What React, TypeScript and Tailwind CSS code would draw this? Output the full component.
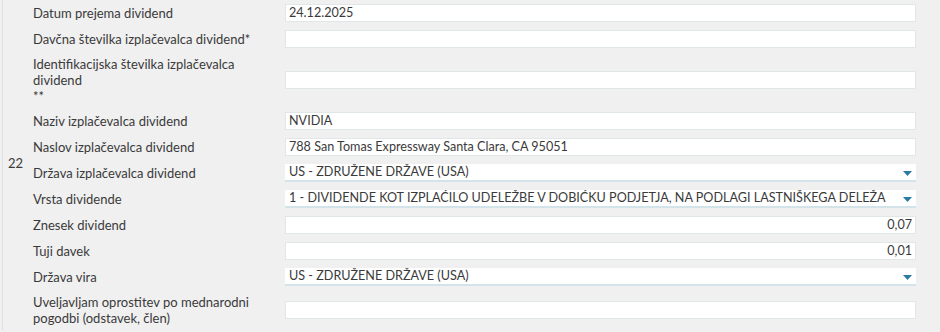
import React from 'react';

type Row = {
    label: React.ReactNode;
    value?: string;
    kind?: 'text' | 'number' | 'select';
};

const rows: Row[] = [
    { label: 'Datum prejema dividend', value: '24.12.2025' },
    { label: 'Davčna številka izplačevalca dividend*' },
    {
        label: (
            <>
                Identifikacijska številka izplačevalca dividend
                <span className="block">**</span>
            </>
        ),
    },
    { label: 'Naziv izplačevalca dividend', value: 'NVIDIA' },
    { label: 'Naslov izplačevalca dividend', value: '788 San Tomas Expressway Santa Clara, CA 95051' },
    { label: 'Država izplačevalca dividend', value: 'US - ZDRUŽENE DRŽAVE (USA)', kind: 'select' },
    {
        label: 'Vrsta dividende',
        value: '1 - DIVIDENDE KOT IZPLAĆILO UDELEŽBE V DOBIĆKU PODJETJA, NA PODLAGI LASTNIŠKEGA DELEŽA',
        kind: 'select',
    },
    { label: 'Znesek dividend', value: '0,07', kind: 'number' },
    { label: 'Tuji davek', value: '0,01', kind: 'number' },
    { label: 'Država vira', value: 'US - ZDRUŽENE DRŽAVE (USA)', kind: 'select' },
    { label: 'Uveljavljam oprostitev po mednarodni pogodbi (odstavek, člen)' },
];

const Field: React.FC<{ value?: string; kind?: Row['kind'] }> = ({ value, kind = 'text' }) => {
    if (kind === 'select') {
        return (
            <div className="relative flex h-[18px] min-w-0 flex-1 items-center border-b-2 border-[#d3e3ea] bg-white pl-[4px] pr-[24px] text-[12.6px]">
                <span className="truncate">{value}</span>
                <svg className="absolute right-[4px] top-[7px]" width="9" height="5" viewBox="0 0 9 5">
                    <path d="M0 0H9L4.5 5Z" fill="#2b7aa6" />
                </svg>
            </div>
        );
    }
    return (
        <div
            className={`flex h-[18px] min-w-0 flex-1 items-center border border-[#e1e7e7] bg-white px-[3px] text-[12.6px] ${
                kind === 'number' ? 'justify-end' : ''
            }`}
        >
            {value}
        </div>
    );
};

export default function App() {
    return (
        <div className="h-[332px] w-[940px] overflow-hidden bg-[#f0f0f0] text-[13px] leading-4 text-[#3a3a3a]" style={{ fontFamily: 'Lato, "Open Sans", sans-serif' }}>
            <div className="ml-[2px] flex border-l border-[#e0e0e0]">
                <div className="flex w-[30px] shrink-0 items-center pl-[5px] pb-[4px]">22</div>
                <div className="flex min-w-0 flex-1 flex-col">
                    {rows.map((row, i) => (
                        <div key={i} className="flex items-center py-1 pr-[24px]">
                            <div className="w-[252px] shrink-0">
                                <div className="max-w-[232px]">{row.label}</div>
                            </div>
                            <Field value={row.value} kind={row.kind} />
                        </div>
                    ))}
                </div>
            </div>
        </div>
    );
}
